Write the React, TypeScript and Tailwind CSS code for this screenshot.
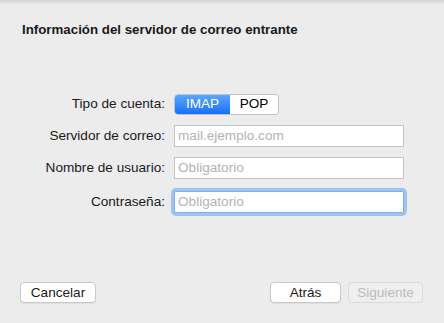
import React from 'react';

const font = { fontFamily: '"Liberation Sans", Arial, sans-serif' };

const Field = ({ placeholder, focused }: { placeholder: string; focused?: boolean }) => (
  <div
    className={`w-[230px] h-[22px] bg-white border flex items-center px-[3px] text-[13.6px] text-[#b3b3b3] ${
      focused ? 'border-[#7fb0ee] ring-[3px] ring-[#9cc3f3] rounded-[2px]' : 'border-[#c4c4c4]'
    }`}
  >
    {placeholder}
  </div>
);

const Row = ({ label, children, className = '' }: { label: string; children: React.ReactNode; className?: string }) => (
  <div className={`flex items-center ${className}`}>
    <div className="w-[166px] text-right text-[13.6px] text-[#1a1a1a] pr-[1px]">{label}</div>
    <div className="ml-[8px]">{children}</div>
  </div>
);

const App: React.FC = () => {
  return (
    <div className="w-[444px] h-[323px] bg-[#ececec] flex flex-col overflow-hidden" style={font}>
      <div className="h-[5px] bg-gradient-to-b from-[#d4d4d4] to-[#ececec]" />
      <h1 className="mt-[17px] pl-[22px] text-[13.3px] leading-[16px] font-bold text-[#1a1a1a]">
        Información del servidor de correo entrante
      </h1>

      <div className="mt-[56px] flex flex-col">
        <Row label="Tipo de cuenta:">
          <div className="flex h-[21px] rounded-[4px] border border-[#c2c2c2] overflow-hidden text-[13.6px]">
            <div className="w-[55px] flex items-center justify-center text-white bg-gradient-to-b from-[#5aa6fb] to-[#1670f5]">
              IMAP
            </div>
            <div className="w-[48px] flex items-center justify-center bg-white text-black">POP</div>
          </div>
        </Row>
        <Row label="Servidor de correo:" className="mt-[10px]">
          <Field placeholder="mail.ejemplo.com" />
        </Row>
        <Row label="Nombre de usuario:" className="mt-[10px]">
          <Field placeholder="Obligatorio" />
        </Row>
        <Row label="Contraseña:" className="mt-[12px]">
          <Field placeholder="Obligatorio" focused />
        </Row>
      </div>

      <div className="mt-auto mb-[20px] flex items-center px-[20px] text-[13.6px]">
        <button className="w-[76px] h-[21px] bg-white border border-[#c8c8c8] rounded-[4px] text-[#1a1a1a] shadow-[0_1px_0_rgba(0,0,0,0.05)]">
          Cancelar
        </button>
        <button className="ml-auto w-[71px] h-[21px] bg-white border border-[#c8c8c8] rounded-[4px] text-[#1a1a1a] shadow-[0_1px_0_rgba(0,0,0,0.05)]">
          Atrás
        </button>
        <button className="ml-[7px] mr-[1px] w-[75px] h-[21px] bg-[#efefef] border border-[#dadada] rounded-[4px] text-[#bcbcbc]">
          Siguiente
        </button>
      </div>
    </div>
  );
};

export default App;
